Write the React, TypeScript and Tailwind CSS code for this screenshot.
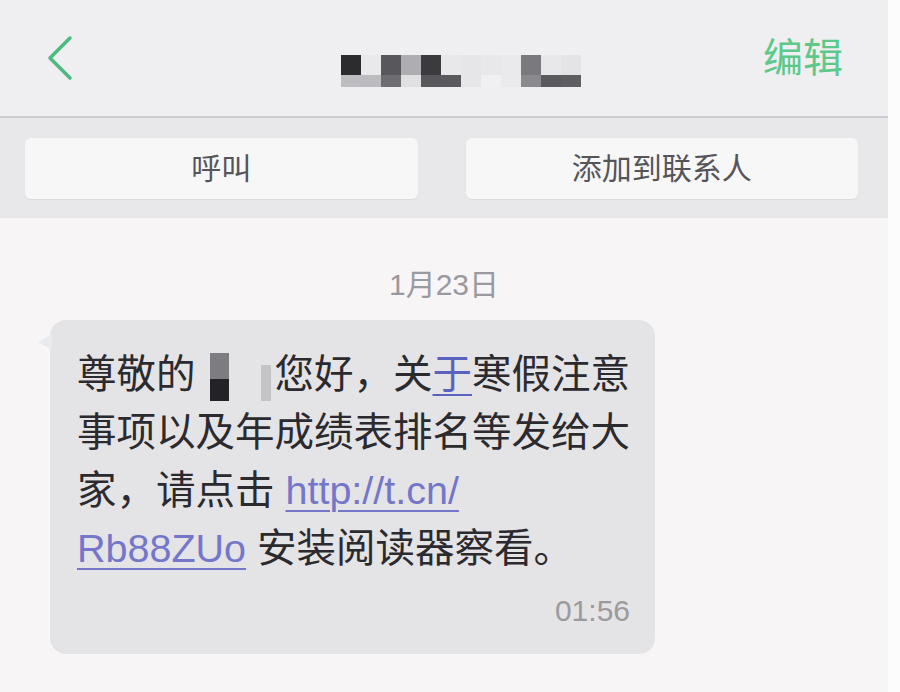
import React from 'react';

const cjk = { fontFamily: '"Liberation Sans", "Noto Sans CJK SC", sans-serif' };

// pixelated contact name (censored in the screenshot)
const mosaicTop = ['#2c2b30', '#e9e8ea', '#58575c', '#aeadb1', '#3b3a3f', '#e8e7e9', '#e6e5e7', '#e8e7e9', '#eae9eb', '#7a797d', '#e8e7e9', '#e4e3e5'];
const mosaicBottom = ['#bdbcc0', '#bcbbbf', '#6e6d72', '#e0dfe2', '#58575c', '#5a595e', '#e6e5e7', '#f0eff1', '#eae9eb', '#8a898d', '#5b5a5f', '#5e5d62'];

function BackIcon() {
  return (
    <svg width="30" height="48" viewBox="0 0 30 48" fill="none">
      <path d="M26 4 L6 24 L26 44" stroke="#4dbb80" strokeWidth="3.5" strokeLinecap="round" strokeLinejoin="round" />
    </svg>
  );
}

function Header() {
  return (
    <div className="h-[116px] bg-[#efeef0] flex items-center justify-between pl-[44px] pr-[45px]">
      <BackIcon />
      <div className="flex flex-col ml-[84px] mt-[26px]">
        <div className="flex">
          {mosaicTop.map((c, i) => (
            <div key={i} className="w-[20px] h-[20px]" style={{ background: c }} />
          ))}
        </div>
        <div className="flex">
          {mosaicBottom.map((c, i) => (
            <div key={i} className="w-[20px] h-[12px]" style={{ background: c }} />
          ))}
        </div>
      </div>
      <span className="text-[40px] leading-none text-[#5cc98b]" style={cjk}>编辑</span>
    </div>
  );
}

function Toolbar() {
  return (
    <div className="h-[102px] bg-[#e8e7e9] border-t-2 border-[#cdccd0] flex items-center gap-[48px] pl-[25px] pr-[30px]">
      <button className="flex-1 h-[61px] rounded-[6px] bg-[#f7f7f8] shadow-[0_1px_1px_rgba(0,0,0,0.06)] text-[30px] text-[#555458]" style={cjk}>
        呼叫
      </button>
      <button className="flex-1 h-[61px] rounded-[6px] bg-[#f7f7f8] shadow-[0_1px_1px_rgba(0,0,0,0.06)] text-[30px] text-[#555458]" style={cjk}>
        添加到联系人
      </button>
    </div>
  );
}

function Link({ children }: { children: React.ReactNode }) {
  return <span className="text-[#7477c9] underline decoration-[2px] underline-offset-[6px]">{children}</span>;
}

function Line({ children }: { children: React.ReactNode }) {
  return <div className="h-[58px] flex items-center whitespace-pre">{children}</div>;
}

function Bubble() {
  return (
    <div className="relative ml-[50px] w-[605px] rounded-[16px] bg-[#e4e3e6] pl-[27px] pr-[25px] pt-[26px] pb-[28px]">
      <div className="absolute left-[-12px] top-[14px] w-0 h-0 border-t-[8px] border-b-[8px] border-r-[14px] border-t-transparent border-b-transparent border-r-[#e9eaee]" />
      <div className="text-[39.5px] leading-none text-[#2b2a2e]" style={cjk}>
        <Line>
          尊敬的
          <span className="flex items-end ml-[14px] mr-[4px] mt-[4px]">
            <span className="flex flex-col w-[19px]">
              <span className="h-[26px] bg-[#7d7c80]" />
              <span className="h-[22px] bg-[#232226]" />
            </span>
            <span className="w-[10px] h-[36px] ml-[32px] bg-[#c4c3c7]" />
          </span>
          您好，关<span className="text-[#5a62c0] underline decoration-[2px] underline-offset-[6px]">于</span>寒假注意
        </Line>
        <Line>事项以及年成绩表排名等发给大</Line>
        <Line>
          家，请点击 <Link>http://t.cn/</Link>
        </Line>
        <Line>
          <Link>Rb88ZUo</Link> 安装阅读器察看。
        </Line>
      </div>
      <div className="flex justify-end mt-[18px] text-[30px] leading-none text-[#9b9a9e]" style={cjk}>
        01:56
      </div>
    </div>
  );
}

export default function App() {
  return (
    <div className="w-[900px] h-[692px] flex bg-[#fdfcfd] overflow-hidden">
      <div className="w-[888px] flex flex-col">
        <Header />
        <Toolbar />
        <div className="flex-1 bg-[#f8f5f7] flex flex-col">
          <div className="text-center text-[30px] leading-none text-[#9a999d] mt-[52px] mb-[20px]" style={cjk}>
            1月23日
          </div>
          <Bubble />
        </div>
      </div>
      <div className="flex-1 bg-[#fcfcfd]" />
    </div>
  );
}
